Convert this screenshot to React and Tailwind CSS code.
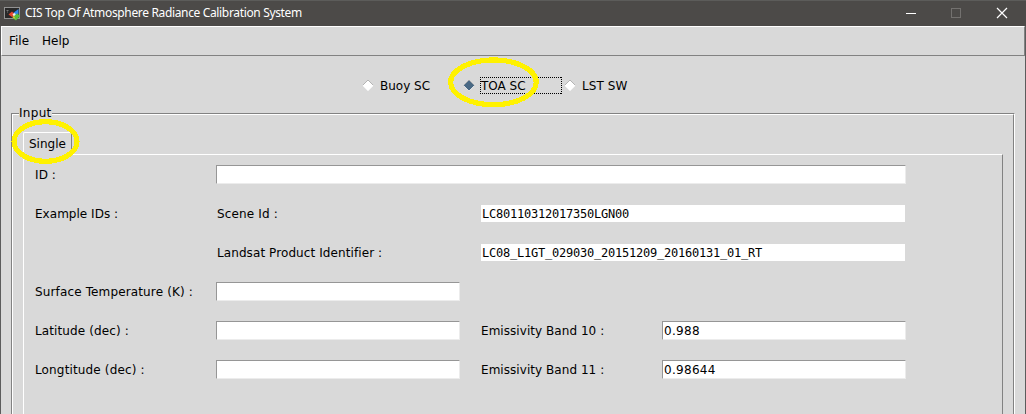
import React from "react";

const sans = "font-['DejaVu_Sans',sans-serif] text-[12px] leading-[19px] whitespace-pre text-black";

function Label({ className = "", children }) {
  return <div className={`${sans} ${className}`}>{children}</div>;
}

function Field({ className = "", tracking = "tracking-[0.09px]", children }) {
  return <div className={`${sans} pt-px ${tracking} ${className}`}>{children}</div>;
}

function Entry({ className = "", value = "" }) {
  return (
    <div className={`h-[19px] border border-t-[#969696] border-l-[#969696] border-r-[#ececec] border-b-[#ececec] bg-white pl-px ${className}`}>
      <div className={`${sans} tracking-[0.3px]`}>{value}</div>
    </div>
  );
}

function Sample({ children }) {
  return (
    <div className="mt-px h-[17px] w-[424px] bg-white pl-px font-['DejaVu_Sans_Mono',monospace] text-[12px] leading-[19px] tracking-[-0.224px] whitespace-pre text-black">
      {children}
    </div>
  );
}

function Diamond({ selected }) {
  return (
    <svg width="12" height="12" viewBox="0 0 12 12" className="mt-[3px] shrink-0">
      <path d="M6 1L11.5 6.5L6 12L0.5 6.5Z" fill={selected ? "#4a6984" : "#fff"} />
      <path d="M0.5 6.5L6 1L11.5 6.5" fill="none" stroke="#a6a6a6" strokeWidth="0.8" />
      <path d="M0.5 6.5L6 12L11.5 6.5" fill="none" stroke="#f2f2f2" strokeWidth="0.8" />
    </svg>
  );
}

function AppIcon() {
  return (
    <svg width="17" height="16" viewBox="0 0 17 16" className="shrink-0">
      <rect x="0.5" y="2.5" width="15" height="11" fill="#292929" stroke="#929292" />
      <path d="M2.5 5.5h2M3 7h1" stroke="#8a8a8a" strokeWidth="0.8" />
      <path d="M8.5 8.5L14.5 4L14.5 9L10.5 10.5Z" fill="#2e86e8" />
      <path d="M4.5 9.5L8 6.5L11 9.5L8 12Z" fill="#e8482f" />
      <path d="M8.5 9L11 8L12 10.5L10 12Z" fill="#f4efe8" />
      <path d="M10 11L13.5 8.5L16 11L12 15.5L8.5 13Z" fill="#58bf38" />
      <path d="M8 12L10 11L11.5 14Z" fill="#f0bd35" />
    </svg>
  );
}

const row = "flex h-[39px] items-start";

export default function App() {
  return (
    <div className="relative flex h-[414px] w-[1026px] flex-col overflow-hidden bg-[#d9d9d9]">
      <header className="flex h-[26px] shrink-0 items-start border-t border-[#5c5c5a] bg-[#4c4a48] pl-1">
        <div className="mt-[4px] flex"><AppIcon /></div>
        <div className="ml-1 mt-[3px] w-[873px] font-['Noto_Sans',sans-serif] text-[12px] leading-[18px] tracking-[-0.345px] whitespace-pre text-white">CIS Top Of Atmosphere Radiance Calibration System</div>
        <svg width="118" height="25" viewBox="0 1 118 25" fill="none" className="ml-[8px]">
          <path d="M0 13.5h10" stroke="#fff" />
          <rect x="45.5" y="8.5" width="9" height="9" stroke="#73716f" />
          <path d="M91 8L101 18M101 8L91 18" stroke="#fff" strokeWidth="1.2" />
        </svg>
      </header>
      <div className="flex min-h-0 flex-1 flex-col border-x border-[#5c5c5c]">
        <nav className="flex h-[30px] shrink-0 gap-[13px] border border-t-white border-l-white border-r-[#828282] border-b-[#828282] pl-[7px] pt-[5px]">
          <Label>File</Label>
          <Label>Help</Label>
        </nav>
        <div className="flex h-[48px] shrink-0 pl-[361px] pt-[20px]">
          <div className="flex w-[101px] items-start gap-[6px]">
            <Diamond /><Field tracking="tracking-normal">Buoy SC</Field>
          </div>
          <div className="flex w-[101px] items-start gap-[5px]">
            <Diamond selected />
            <div className="relative mt-px h-[17px] w-[82px] pl-px">
              <svg className="absolute left-0 top-0" width="82" height="17" viewBox="0 0 82 17" shapeRendering="crispEdges">
                <path d="M0 0.5H82M0 16.5H82M0.5 0V17M81.5 0V17" fill="none" stroke="#000" strokeDasharray="1 1" />
              </svg>
              <Label>TOA SC</Label>
            </div>
          </div>
          <div className="flex items-start gap-[6px]">
            <Diamond /><Field>LST SW</Field>
          </div>
        </div>
        <fieldset className="mx-[10px] flex min-h-0 flex-1 flex-col">
          <legend className="relative z-10 ml-[8px] -mb-[10px] h-[19px] w-[33px] bg-[#d9d9d9]"><Label className="tracking-[0.3px]">Input</Label></legend>
          <div className="flex min-h-0 flex-1 flex-col border-l border-t border-r border-[#828282] border-r-white">
            <div className="flex min-h-0 flex-1 flex-col border-l border-t border-r border-white border-r-[#828282] px-[10px] pt-[17px]">
              <div className="relative z-10 h-[23px] w-[49px] shrink-0 rounded-t-[2px] border-x border-t border-white border-r-[#828282] bg-[#d9d9d9] pl-[5px] pt-[2px]">
                <Label>Single</Label>
              </div>
              <div className="-mt-px flex min-h-0 flex-1 flex-col border-l border-t border-r border-white border-r-[#828282] pl-[11px] pt-[10px]">
                <div className={row}>
                  <Field className="w-[181px]">ID :</Field><Entry className="w-[690px]" />
                </div>
                <div className={row}>
                  <Field className="w-[182px]" tracking="tracking-[0.03px]">Example IDs :</Field><Field className="w-[264px]" tracking="tracking-[0.15px]">Scene Id :</Field><Sample>LC80110312017350LGN00</Sample>
                </div>
                <div className={row}>
                  <Field className="ml-[182px] w-[264px]">Landsat Product Identifier :</Field><Sample>LC08_L1GT_029030_20151209_20160131_01_RT</Sample>
                </div>
                <div className={row}>
                  <Field className="w-[181px]" tracking="tracking-[0.14px]">Surface Temperature (K) :</Field><Entry className="w-[244px]" />
                </div>
                <div className={row}>
                  <Field className="w-[181px]" tracking="tracking-[0.11px]">Latitude (dec) :</Field><Entry className="w-[244px]" />
                  <Field className="ml-[21px] w-[181px]" tracking="tracking-[0.05px]">Emissivity Band 10 :</Field><Entry className="w-[244px]" value="0.988" />
                </div>
                <div className={row}>
                  <Field className="w-[181px]" tracking="tracking-[0.15px]">Longtitude (dec) :</Field><Entry className="w-[244px]" />
                  <Field className="ml-[21px] w-[181px]" tracking="tracking-[0.05px]">Emissivity Band 11 :</Field><Entry className="w-[244px]" value="0.98644" />
                </div>
              </div>
            </div>
          </div>
        </fieldset>
      </div>
      <svg className="pointer-events-none absolute left-0 top-0 z-20" width="1026" height="414" fill="none" stroke="#fff200" strokeWidth="5.2" shapeRendering="crispEdges">
        <ellipse cx="493.4" cy="82.3" rx="42.8" ry="22.4" />
        <ellipse cx="45.5" cy="141.5" rx="31.5" ry="19.8" />
      </svg>
    </div>
  );
}
